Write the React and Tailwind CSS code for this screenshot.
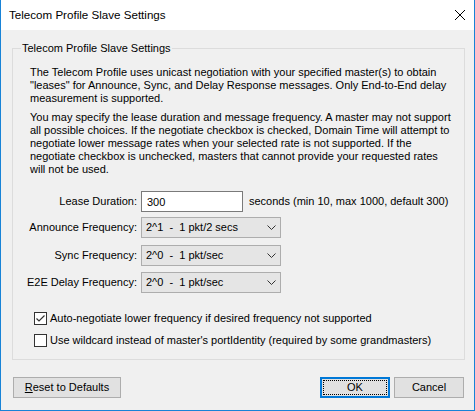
import React from 'react';

const Chevron = () => (
  <svg width="9" height="5" viewBox="0 0 9 5" className="shrink-0">
    <polyline points="0.5,0.5 4.5,4.5 8.5,0.5" fill="none" stroke="#333" strokeWidth="1" />
  </svg>
);

const Select = ({ value, className = '' }) => (
  <div className={`w-[140px] h-[21px] border border-[#adadad] bg-[#e5e5e5] flex items-center justify-between pl-[4px] pr-[4px] ${className}`}>
    <span className="whitespace-pre">{value}</span>
    <Chevron />
  </div>
);

const FieldRow = ({ label, children, className = '' }) => (
  <div className={`flex items-center ${className}`}>
    <div className="w-[107px] shrink-0 flex justify-end whitespace-nowrap">{label}</div>
    <div className="ml-[4px] flex items-center">{children}</div>
  </div>
);

const Checkbox = ({ checked, label, className = '' }) => (
  <div className={`flex items-center h-[13px] ml-[4px] ${className}`}>
    <div className="w-[13px] h-[13px] border border-[#333] bg-white shrink-0 flex items-center justify-center">
      {checked && (
        <svg width="11" height="11" viewBox="0 0 11 11">
          <polyline points="1.5,5.5 4,8 9.5,2.5" fill="none" stroke="#333" strokeWidth="1.2" />
        </svg>
      )}
    </div>
    <span className="ml-[3px] whitespace-nowrap">{label}</span>
  </div>
);

export default function App() {
  return (
    <div className="w-[475px] h-[411px] flex flex-col border-l border-r border-b border-[#1883d7] bg-[#f0f0f0] font-['Liberation_Sans',Arial,sans-serif] text-[11px] text-black">
      {/* title bar */}
      <div className="h-[30px] shrink-0 bg-white flex items-center justify-between pl-[8px] pr-[9px] text-[11.6px]">
        <span className="whitespace-nowrap">Telecom Profile Slave Settings</span>
        <svg width="10" height="10" viewBox="0 0 10 10">
          <path d="M0 0 L10 10 M10 0 L0 10" stroke="#000" strokeWidth="1" />
        </svg>
      </div>

      <div className="flex flex-col pl-[11px] pr-[9px]">
        <fieldset className="min-w-0 mt-[10px] border border-[#dcdcdc] px-[17px] pt-[10px] pb-[12px]">
          <legend className="-ml-[9px] px-[1px] leading-[16px]">Telecom Profile Slave Settings</legend>

          <p className="leading-[13px] whitespace-nowrap">
            The Telecom Profile uses unicast negotiation with your specified master(s) to obtain<br />
            "leases" for Announce, Sync, and Delay Response messages. Only End-to-End delay<br />
            measurement is supported.
          </p>
          <p className="mt-[6px] leading-[13px] whitespace-nowrap">
            You may specify the lease duration and message frequency. A master may not support<br />
            all possible choices. If the negotiate checkbox is checked, Domain Time will attempt to<br />
            negotiate lower message rates when your selected rate is not supported. If the<br />
            negotiate checkbox is unchecked, masters that cannot provide your requested rates<br />
            will not be used.
          </p>

          <div className="mt-[15px] flex flex-col">
            <FieldRow label="Lease Duration:">
              <input
                defaultValue="300"
                className="w-[102px] h-[21px] border border-[#7a7a7a] bg-white px-[5px] outline-none"
              />
              <span className="ml-[6px] whitespace-nowrap">seconds (min 10, max 1000, default 300)</span>
            </FieldRow>
            <FieldRow label="Announce Frequency:" className="mt-[5px]">
              <Select value="2^1  -  1 pkt/2 secs" />
            </FieldRow>
            <FieldRow label="Sync Frequency:" className="mt-[7px]">
              <Select value="2^0  -  1 pkt/sec" />
            </FieldRow>
            <FieldRow label="E2E Delay Frequency:" className="mt-[6px]">
              <Select value="2^0  -  1 pkt/sec" />
            </FieldRow>
          </div>

          <Checkbox checked className="mt-[19px]" label="Auto-negotiate lower frequency if desired frequency not supported" />
          <Checkbox className="mt-[9px]" label="Use wildcard instead of master's portIdentity (required by some grandmasters)" />
        </fieldset>

        <div className="mt-[17px] flex pl-[1px] pr-[1px]">
          <button className="w-[108px] h-[21px] border border-[#adadad] bg-[#e1e1e1] flex items-center justify-center">
            <span><span className="underline">R</span>eset to Defaults</span>
          </button>
          <button className="ml-auto w-[70px] h-[21px] border-2 border-[#0078d7] bg-[#e1e1e1] p-[1px]">
            <div className="w-full h-full border border-dotted border-black flex items-center justify-center">OK</div>
          </button>
          <button className="ml-[4px] w-[70px] h-[21px] border border-[#adadad] bg-[#e1e1e1] flex items-center justify-center">
            Cancel
          </button>
        </div>
      </div>
    </div>
  );
}
